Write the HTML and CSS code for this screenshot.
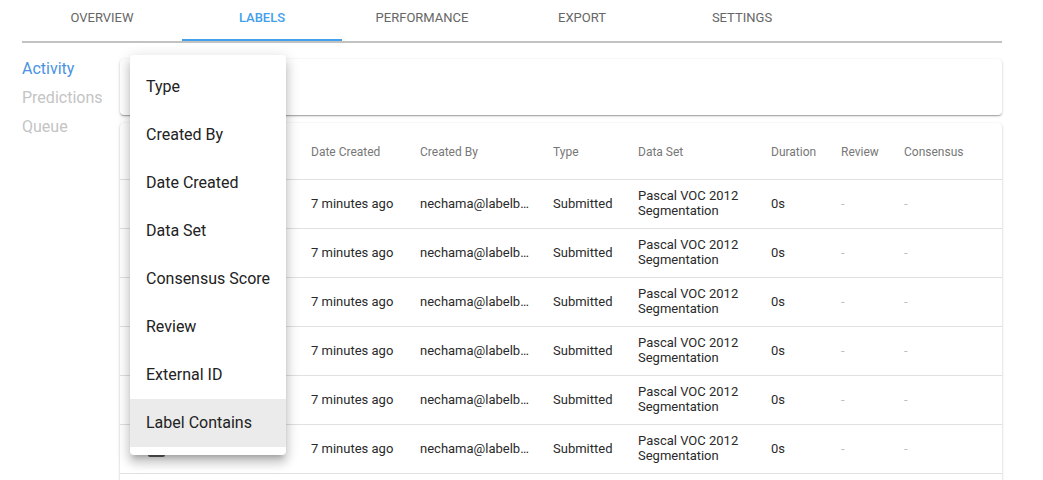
FILE: index.html
```html
<!DOCTYPE html>
<html>
<head>
<meta charset="utf-8">
<link rel="stylesheet" href="styles.css">
</head>
<body>
<div class="page">
  <nav class="tabs">
    <div class="tab">Overview</div>
    <div class="tab active">Labels</div>
    <div class="tab">Performance</div>
    <div class="tab">Export</div>
    <div class="tab">Settings</div>
  </nav>
  <div class="main">
    <aside class="side">
      <div class="side-item active">Activity</div>
      <div class="side-item">Predictions</div>
      <div class="side-item">Queue</div>
    </aside>
    <section class="content">
      <div class="card filter-card"></div>
      <div class="card table-card">
        <div class="row head">
          <div class="c cb"></div>
          <div class="c">Date Created</div>
          <div class="c">Created By</div>
          <div class="c">Type</div>
          <div class="c">Data Set</div>
          <div class="c">Duration</div>
          <div class="c">Review</div>
          <div class="c">Consensus</div>
        </div>
        <div class="row"><div class="c cb"><span class="box"></span></div><div class="c">7 minutes ago</div><div class="c"><span class="ell">nechama@labelb…</span></div><div class="c">Submitted</div><div class="c"><span class="ds">Pascal VOC 2012 Segmentation</span></div><div class="c">0s</div><div class="c dash">-</div><div class="c dash">-</div></div>
        <div class="row"><div class="c cb"><span class="box"></span></div><div class="c">7 minutes ago</div><div class="c"><span class="ell">nechama@labelb…</span></div><div class="c">Submitted</div><div class="c"><span class="ds">Pascal VOC 2012 Segmentation</span></div><div class="c">0s</div><div class="c dash">-</div><div class="c dash">-</div></div>
        <div class="row"><div class="c cb"><span class="box"></span></div><div class="c">7 minutes ago</div><div class="c"><span class="ell">nechama@labelb…</span></div><div class="c">Submitted</div><div class="c"><span class="ds">Pascal VOC 2012 Segmentation</span></div><div class="c">0s</div><div class="c dash">-</div><div class="c dash">-</div></div>
        <div class="row"><div class="c cb"><span class="box"></span></div><div class="c">7 minutes ago</div><div class="c"><span class="ell">nechama@labelb…</span></div><div class="c">Submitted</div><div class="c"><span class="ds">Pascal VOC 2012 Segmentation</span></div><div class="c">0s</div><div class="c dash">-</div><div class="c dash">-</div></div>
        <div class="row"><div class="c cb"><span class="box"></span></div><div class="c">7 minutes ago</div><div class="c"><span class="ell">nechama@labelb…</span></div><div class="c">Submitted</div><div class="c"><span class="ds">Pascal VOC 2012 Segmentation</span></div><div class="c">0s</div><div class="c dash">-</div><div class="c dash">-</div></div>
        <div class="row"><div class="c cb"><span class="box"></span></div><div class="c">7 minutes ago</div><div class="c"><span class="ell">nechama@labelb…</span></div><div class="c">Submitted</div><div class="c"><span class="ds">Pascal VOC 2012 Segmentation</span></div><div class="c">0s</div><div class="c dash">-</div><div class="c dash">-</div></div>
      </div>
      <ul class="menu">
        <li class="menu-item">Type</li>
        <li class="menu-item">Created By</li>
        <li class="menu-item">Date Created</li>
        <li class="menu-item">Data Set</li>
        <li class="menu-item">Consensus Score</li>
        <li class="menu-item">Review</li>
        <li class="menu-item">External ID</li>
        <li class="menu-item hover">Label Contains</li>
      </ul>
    </section>
  </div>
</div>
</body>
</html>
```
FILE: styles.css
```css
* { box-sizing: border-box; }
html, body {
  margin: 0;
  padding: 0;
  background: #fff;
  font-family: Roboto, "Liberation Sans", sans-serif;
  overflow: hidden;
  height: 480px;
}
.page {
  width: 980px;
  margin-left: 22px;
}
.tabs {
  display: flex;
  border-bottom: 2px solid #c2c2c2;
  height: 43px;
}
.tab {
  width: 160px;
  height: 41px;
  padding-top: 10px;
  line-height: 16px;
  text-align: center;
  text-transform: uppercase;
  font-size: 13px;
  color: #666;
  border-bottom: 2px solid transparent;
}
.tab.active {
  color: #42a0ec;
  font-weight: 500;
  border-bottom-color: #42a0ec;
}
.main {
  display: flex;
}
.side {
  width: 98px;
  padding-top: 11px;
}
.side-item {
  font-size: 16px;
  line-height: 29px;
  color: #c4c4c4;
}
.side-item.active {
  color: #4a92e3;
}
.content {
  flex: 1;
  position: relative;
  padding-top: 16px;
}
.card {
  background: #fff;
  border-radius: 4px;
  box-shadow: 0 1px 3px rgba(0,0,0,0.2), 0 1px 1px rgba(0,0,0,0.14), 0 2px 1px -1px rgba(0,0,0,0.12);
}
.filter-card {
  height: 56px;
  margin-bottom: 8px;
}
.table-card {
  height: 360px;
}
.row {
  display: grid;
  grid-template-columns: 163px 109px 133px 85px 133px 70px 63px 1fr;
  padding-left: 28px;
  padding-bottom: 2px;
  height: 49px;
  align-items: center;
  border-bottom: 1px solid #e0e0e0;
  font-size: 13px;
  color: #2a2a2a;
}
.row.head {
  height: 57px;
  padding-top: 2px;
  padding-bottom: 0;
  font-size: 12px;
  color: #777;
}
.c {
  white-space: nowrap;
}
.ell {
  display: block;
  width: 112px;
  overflow: hidden;
}
.ds {
  display: block;
  white-space: normal;
  width: 112px;
  line-height: 15px;
}
.dash {
  color: #bdbdbd;
}
.box {
  display: block;
  width: 17px;
  height: 17px;
  border: 2px solid #5f5f5f;
  border-radius: 2px;
}
.menu {
  position: absolute;
  left: 10px;
  top: 12px;
  width: 156px;
  margin: 0;
  padding: 8px 0;
  list-style: none;
  background: #fff;
  border-radius: 4px;
  box-shadow: 0 5px 5px -3px rgba(0,0,0,0.2), 0 8px 10px 1px rgba(0,0,0,0.14), 0 3px 14px 2px rgba(0,0,0,0.12);
}
.menu-item {
  height: 48px;
  line-height: 48px;
  padding-left: 16px;
  font-size: 16px;
  color: #222;
  white-space: nowrap;
}
.menu-item.hover {
  background: #ebebeb;
}
```
